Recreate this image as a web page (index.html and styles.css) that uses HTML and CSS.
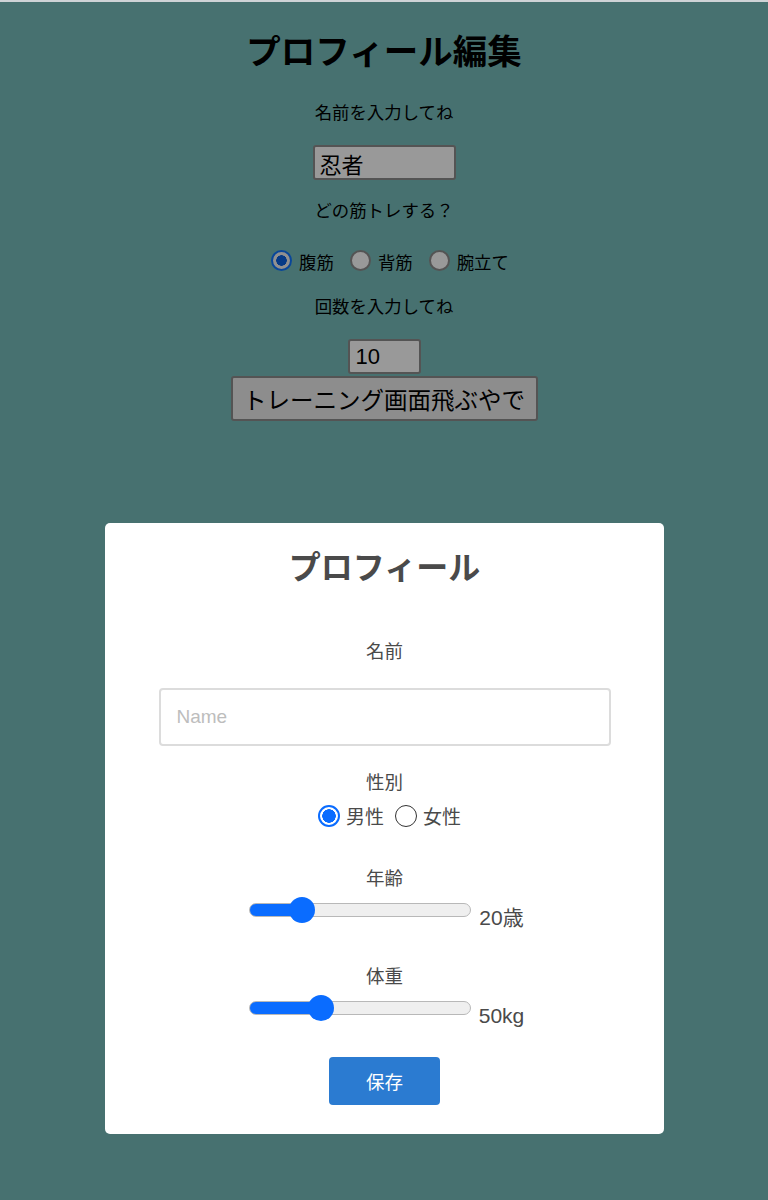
FILE: index.html
```html
<!DOCTYPE html>
<html lang="ja">
<head>
<meta charset="utf-8">
<title>プロフィール編集</title>
<link rel="stylesheet" href="styles.css">
</head>
<body>
<main class="editor">
  <h1 class="editor-title">プロフィール編集</h1>
  <p class="editor-label">名前を入力してね</p>
  <input class="editor-input name-input" type="text" value="忍者">
  <p class="editor-label">どの筋トレする？</p>
  <div class="editor-radios">
    <label class="editor-radio"><input type="radio" name="menu" checked><span>腹筋</span></label>
    <label class="editor-radio"><input type="radio" name="menu"><span>背筋</span></label>
    <label class="editor-radio"><input type="radio" name="menu"><span>腕立て</span></label>
  </div>
  <p class="editor-label">回数を入力してね</p>
  <input class="editor-input count-input" type="text" value="10">
  <button class="editor-button" type="button">トレーニング画面飛ぶやで</button>
</main>

<div class="overlay">
  <section class="card">
    <h2 class="card-title">プロフィール</h2>
    <p class="card-label label-name">名前</p>
    <input class="card-input" type="text" placeholder="Name">
    <p class="card-label label-gender">性別</p>
    <div class="card-radios">
      <label class="card-radio"><input type="radio" name="gender" checked><span>男性</span></label>
      <label class="card-radio"><input type="radio" name="gender"><span>女性</span></label>
    </div>
    <p class="card-label label-age">年齢</p>
    <div class="slider-row">
      <input class="slider" type="range" min="0" max="100" value="20" style="--p:23.5%">
      <span class="slider-value">20歳</span>
    </div>
    <p class="card-label label-weight">体重</p>
    <div class="slider-row">
      <input class="slider" type="range" min="20" max="120" value="50" style="--p:32.5%">
      <span class="slider-value">50kg</span>
    </div>
    <button class="save-button" type="button">保存</button>
  </section>
</div>
</body>
</html>
```

FILE: styles.css
```css
html, body {
  margin: 0;
  padding: 0;
}

body {
  background: #77bdbb;
  border-top: 2px solid #cfd3d6;
  min-height: 1198px;
  font-family: "Liberation Sans", "Noto Sans CJK JP", sans-serif;
  color: #000;
}

.editor {
  display: flex;
  flex-direction: column;
  align-items: center;
  padding-top: 30px;
}

.editor-title {
  margin: 0;
  font-size: 34.5px;
  line-height: 40px;
  font-weight: 700;
}

.editor-label {
  margin: 0;
  font-size: 17.4px;
  line-height: 24px;
}

.editor-title + .editor-label {
  margin-top: 29px;
}

.editor-input {
  box-sizing: border-box;
  height: 35px;
  margin: 0;
  padding: 0 5px;
  border: 2px solid #8c8c8c;
  border-radius: 3px;
  background: #fff;
  font-family: "Liberation Sans", "Noto Sans CJK JP", sans-serif;
  font-size: 22px;
  color: #000;
}

.name-input {
  width: 143px;
  margin-top: 20px;
  margin-bottom: 19px;
}

.editor-radios {
  display: flex;
  gap: 16px;
  margin-top: 25px;
  margin-bottom: 23px;
  margin-left: 12px;
  height: 24px;
  align-items: center;
}

.editor-radio {
  display: flex;
  align-items: center;
  gap: 7px;
  font-size: 17.4px;
  line-height: 24px;
}

.editor-radio span {
  position: relative;
  top: 3px;
}

.editor-radio input {
  appearance: none;
  -webkit-appearance: none;
  box-sizing: border-box;
  width: 21px;
  height: 21px;
  margin: 0;
  border: 2px solid #8c8c8c;
  border-radius: 50%;
  background: #fff;
}

.editor-radio input:checked {
  border-color: #0f76ff;
  background: radial-gradient(circle, #0a62e0 0 5px, #f0f0f0 5.5px);
}

.count-input {
  width: 73px;
  margin-top: 20px;
  padding-left: 6px;
}

.editor-button {
  box-sizing: border-box;
  width: 307px;
  height: 45px;
  margin-top: 2px;
  border: 2px solid #8c8c8c;
  border-radius: 3px;
  background: #ececec;
  font-family: "Liberation Sans", "Noto Sans CJK JP", sans-serif;
  font-size: 23.5px;
  color: #000;
  padding: 0;
}

.overlay {
  position: fixed;
  top: 2px;
  left: 0;
  right: 0;
  bottom: 0;
  background: rgba(0, 0, 0, 0.4);
  display: flex;
  justify-content: center;
  align-items: flex-start;
}

.card {
  box-sizing: border-box;
  width: 559px;
  margin-top: 521px;
  margin-left: 1px;
  padding: 25px 0 29px;
  background: #fff;
  border-radius: 5px;
  display: flex;
  flex-direction: column;
  align-items: center;
  color: #4a4a4a;
}

.card-title {
  margin: 0;
  font-size: 32px;
  line-height: 40px;
  font-weight: 700;
  color: #4a4a4a;
}

.card-label {
  margin: 0;
  font-size: 18.5px;
  line-height: 24px;
}

.label-name {
  margin-top: 52px;
}

.card-input {
  box-sizing: border-box;
  width: 452px;
  height: 58px;
  margin-top: 24px;
  padding: 0 16px;
  border: 2px solid #dcdcdc;
  border-radius: 4px;
  font-family: "Liberation Sans", "Noto Sans CJK JP", sans-serif;
  font-size: 19px;
  color: #333;
}

.card-input::placeholder {
  color: #bdbdbd;
}

.label-gender {
  margin-top: 25px;
}

.card-radios {
  display: flex;
  gap: 11px;
  margin-top: 9px;
  margin-left: 10px;
  height: 24px;
  align-items: center;
}

.card-radio {
  display: flex;
  align-items: center;
  gap: 6px;
  font-size: 19px;
  line-height: 24px;
}

.card-radio span {
  position: relative;
  top: 2px;
}

.card-radio input {
  appearance: none;
  -webkit-appearance: none;
  box-sizing: border-box;
  width: 22px;
  height: 22px;
  margin: 0;
  border: 1.5px solid #333;
  border-radius: 50%;
  background: #fff;
}

.card-radio input:checked {
  border: 2px solid #0a6cff;
  background: radial-gradient(circle, #0a6cff 0 6.5px, #fff 7px);
}

.label-age {
  margin-top: 39px;
}

.slider-row {
  display: flex;
  align-items: flex-end;
  gap: 8px;
  margin-top: 5px;
  height: 34px;
  margin-left: 4px;
}

.slider {
  appearance: none;
  -webkit-appearance: none;
  box-sizing: border-box;
  width: 222px;
  height: 14px;
  margin: 0 0 13px;
  border: 1.5px solid #b8b8b8;
  border-radius: 7px;
  background: linear-gradient(to right, #0a6cff 0 var(--p), #efefef var(--p));
}

.slider::-webkit-slider-thumb {
  -webkit-appearance: none;
  appearance: none;
  width: 26px;
  height: 26px;
  border-radius: 50%;
  background: #0a6cff;
  border: none;
}

.slider-value {
  font-size: 21px;
  line-height: 24px;
  color: #4a4a4a;
}

.label-weight {
  margin-top: 35px;
}

.save-button {
  box-sizing: border-box;
  width: 111px;
  height: 48px;
  margin-top: 29px;
  border: none;
  border-radius: 4px;
  background: #2b7bd1;
  color: #fff;
  font-family: "Liberation Sans", "Noto Sans CJK JP", sans-serif;
  font-size: 18.5px;
}
```
